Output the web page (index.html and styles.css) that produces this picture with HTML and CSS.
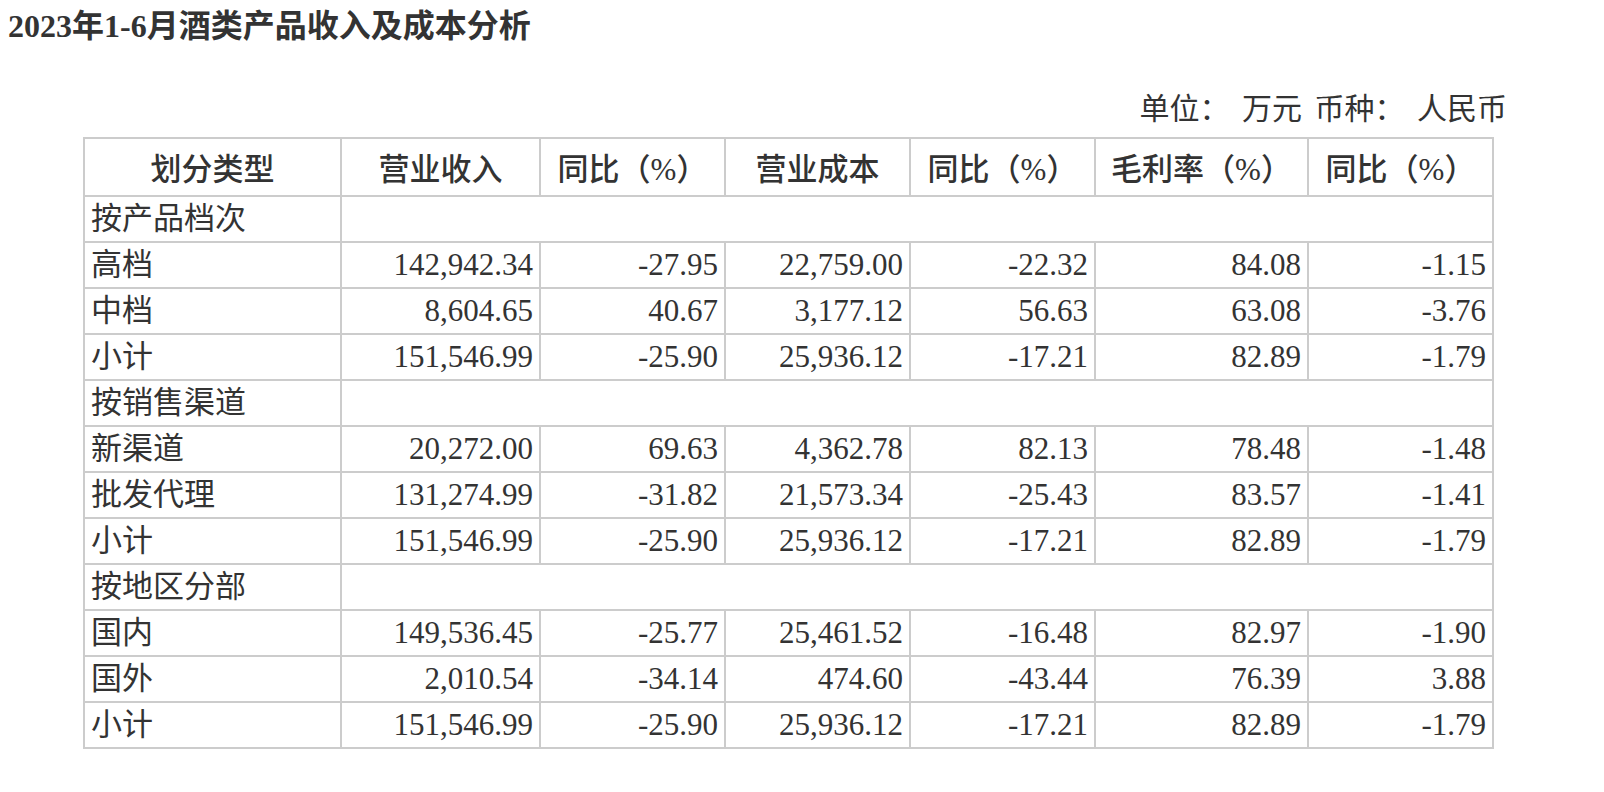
FILE: index.html
```html
<!DOCTYPE html>
<html lang="zh-CN">
<head>
<meta charset="utf-8">
<title>2023年1-6月酒类产品收入及成本分析</title>
<link rel="stylesheet" href="styles.css">
</head>
<body>
<div class="page">
  <h1 class="title">2023年1-6月酒类产品收入及成本分析</h1>
  <div class="unit">单位： 万元 币种： 人民币</div>
  <div class="table">
    <div class="th">划分类型</div>
    <div class="th">营业收入</div>
    <div class="th">同比（%）</div>
    <div class="th">营业成本</div>
    <div class="th">同比（%）</div>
    <div class="th">毛利率（%）</div>
    <div class="th">同比（%）</div>

    <div class="td label">按产品档次</div><div class="td span"></div>

    <div class="td label">高档</div><div class="td num">142,942.34</div><div class="td num">-27.95</div><div class="td num">22,759.00</div><div class="td num">-22.32</div><div class="td num">84.08</div><div class="td num">-1.15</div>
    <div class="td label">中档</div><div class="td num">8,604.65</div><div class="td num">40.67</div><div class="td num">3,177.12</div><div class="td num">56.63</div><div class="td num">63.08</div><div class="td num">-3.76</div>
    <div class="td label">小计</div><div class="td num">151,546.99</div><div class="td num">-25.90</div><div class="td num">25,936.12</div><div class="td num">-17.21</div><div class="td num">82.89</div><div class="td num">-1.79</div>

    <div class="td label">按销售渠道</div><div class="td span"></div>

    <div class="td label">新渠道</div><div class="td num">20,272.00</div><div class="td num">69.63</div><div class="td num">4,362.78</div><div class="td num">82.13</div><div class="td num">78.48</div><div class="td num">-1.48</div>
    <div class="td label">批发代理</div><div class="td num">131,274.99</div><div class="td num">-31.82</div><div class="td num">21,573.34</div><div class="td num">-25.43</div><div class="td num">83.57</div><div class="td num">-1.41</div>
    <div class="td label">小计</div><div class="td num">151,546.99</div><div class="td num">-25.90</div><div class="td num">25,936.12</div><div class="td num">-17.21</div><div class="td num">82.89</div><div class="td num">-1.79</div>

    <div class="td label">按地区分部</div><div class="td span"></div>

    <div class="td label">国内</div><div class="td num">149,536.45</div><div class="td num">-25.77</div><div class="td num">25,461.52</div><div class="td num">-16.48</div><div class="td num">82.97</div><div class="td num">-1.90</div>
    <div class="td label">国外</div><div class="td num">2,010.54</div><div class="td num">-34.14</div><div class="td num">474.60</div><div class="td num">-43.44</div><div class="td num">76.39</div><div class="td num">3.88</div>
    <div class="td label">小计</div><div class="td num">151,546.99</div><div class="td num">-25.90</div><div class="td num">25,936.12</div><div class="td num">-17.21</div><div class="td num">82.89</div><div class="td num">-1.79</div>
  </div>
</div>
</body>
</html>
```

FILE: styles.css
```css
html, body {
  margin: 0;
  padding: 0;
  background: #ffffff;
}

body {
  font-family: "Liberation Serif", "Noto Sans CJK SC", serif;
  color: #333333;
}

.page {
  padding: 4px 0 0 8px;
}

.title {
  margin: 0;
  font-size: 32px;
  line-height: 44px;
  font-weight: 700;
  color: #333333;
}

.unit {
  margin-top: 39px;
  padding-right: 97px;
  font-size: 30px;
  line-height: 44px;
  text-align: right;
  word-spacing: 5px;
}

.table {
  margin-top: 6px;
  margin-left: 75px;
  display: grid;
  grid-template-columns: 257px 199px 185px 185px 185px 213px 185px;
  grid-template-rows: 58px;
  grid-auto-rows: 46px;
  width: max-content;
  border-top: 2px solid #cccccc;
  border-left: 2px solid #cccccc;
  font-size: 31px;
}

.th,
.td {
  box-sizing: border-box;
  border-right: 2px solid #cccccc;
  border-bottom: 2px solid #cccccc;
  line-height: 44px;
  white-space: nowrap;
}

.th {
  padding: 9px 0 3px;
  text-align: center;
  font-weight: 500;
}

.label {
  padding-left: 6px;
  text-align: left;
}

.num {
  padding-right: 6px;
  text-align: right;
}

.span {
  grid-column: span 6;
}
```
